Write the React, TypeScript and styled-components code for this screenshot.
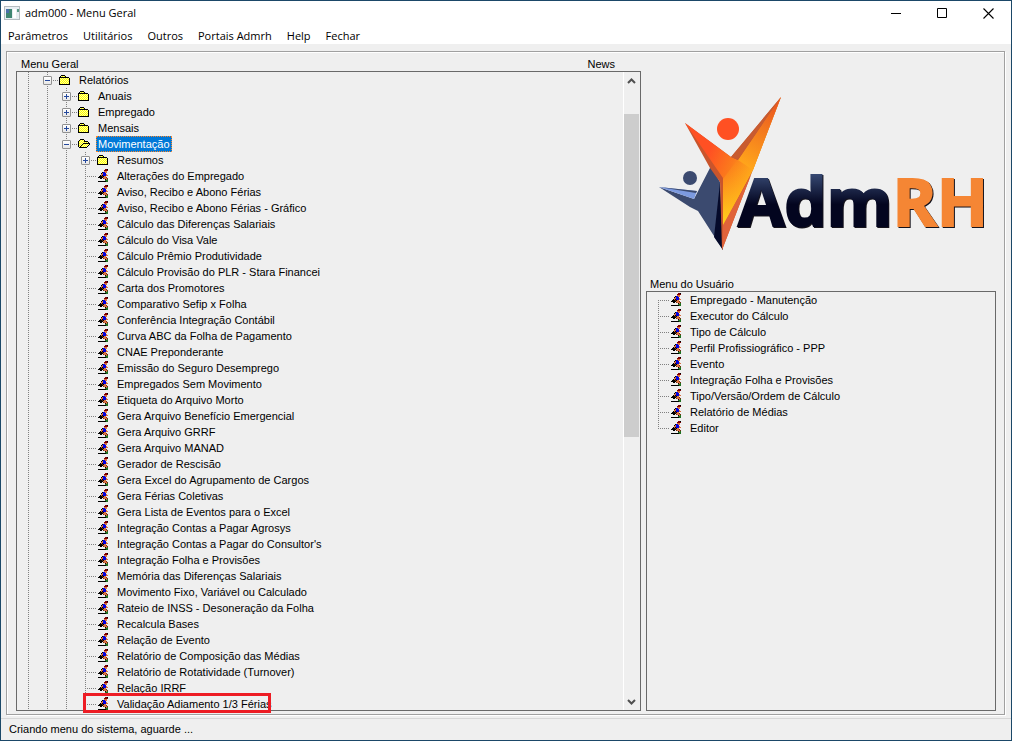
import React from "react";
import styled, { createGlobalStyle, css } from "styled-components";

const GlobalStyle = createGlobalStyle`
  *, *::before, *::after { box-sizing: border-box; }
  body { margin: 0; background: #efefef; }
  button { font: inherit; color: inherit; background: none; border: 0; padding: 0; margin: 0; }
`;

const legacyFont = css`
  font: 11px/16px "Liberation Sans", Arial, sans-serif;
  color: #000;
`;

const Window = styled.div`
  min-height: 100vh;
  display: flex;
  flex-direction: column;
  border: 1px solid #1b4868;
  background: #efefef;
  ${legacyFont}
`;

const TitleBar = styled.header`
  display: flex;
  align-items: center;
  height: 24px;
  padding-left: 3px;
  background: #fff;
  font: 11px/16px "Open Sans", "Noto Sans", sans-serif;
`;

const Title = styled.h1`
  flex: 1;
  margin: 0 0 0 5px;
  font: inherit;
`;

const CaptionButton = styled.button`
  width: 46px;
  height: 24px;
  display: flex;
  align-items: center;
  justify-content: center;
`;

const MenuBar = styled.nav`
  display: flex;
  gap: 15px;
  height: 19px;
  padding-left: 7px;
  background: #fff;
  font: 11px/22px "Open Sans", "Noto Sans", sans-serif;
`;

const MenuButton = styled.button`
  white-space: nowrap;
  height: 22px;
`;

const Frame = styled.main`
  flex: 1;
  display: flex;
  gap: 5px;
  margin: 7px 6px 3px 5px;
  padding: 4px 8px 3px 9px;
  border: 1px solid #a0a0a0;
  box-shadow: 1px 1px 0 #fff, inset 1px 1px 0 #fff;
`;

const MainColumn = styled.section`
  position: relative;
  flex: 625 1 0;
  min-width: 0;
  display: flex;
  flex-direction: column;
`;

const SideColumn = styled.section`
  flex: 350 1 0;
  min-width: 0;
  display: flex;
  flex-direction: column;
`;

const Captions = styled.div`
  display: flex;
  justify-content: space-between;
  height: 15px;
  padding: 0 26px 0 5px;
`;

const SideCaption = styled.h2`
  margin: 0;
  height: 15px;
  padding-left: 4px;
  font: inherit;
`;

const Panel = styled.div`
  flex: 1;
  display: flex;
  border: 1px solid #696969;
`;

const Tree = styled.ul`
  flex: 1;
  min-width: 0;
  height: 638px;
  margin: 0;
  padding: 0 0 0 2px;
  list-style: none;
  overflow: hidden;
`;

const SideTree = styled(Tree)`
  height: auto;
`;

const Row = styled.li`
  display: flex;
  height: 16px;
  white-space: nowrap;
`;

const dotsDown = "repeating-linear-gradient(to bottom, #808080 0 1px, transparent 1px 2px)";
const dotsAcross = "repeating-linear-gradient(to right, #808080 0 1px, transparent 1px 2px)";

type Span = "full" | "top" | "bottom";

const Guide = styled.span<{ $span?: Span; $branch?: boolean }>`
  flex: none;
  width: 19px;
  height: 16px;
  display: flex;
  align-items: center;
  justify-content: center;
  background-image: ${dotsDown}, ${p => (p.$branch ? dotsAcross : "none")};
  background-repeat: no-repeat;
  background-size: 1px ${p => (p.$span === "top" || p.$span === "bottom" ? "8px" : "16px")}, 10px 1px;
  background-position: 9px ${p => (p.$span === "bottom" ? "8px" : "0")}, 9px 8px;
`;

const Expander = styled.button`
  flex: none;
  width: 9px;
  height: 9px;
  margin-top: 1px;
  border: 1px solid #919191;
  border-radius: 1px;
  background: linear-gradient(#fff, #e6e6e6);
  display: flex;
`;

const IconCell = styled.span`
  flex: none;
  width: 19px;
  height: 16px;
  display: flex;
  align-items: center;
  justify-content: flex-start;
  padding-left: 2px;
  background: ${dotsAcross} 0 8px / 2px 1px no-repeat;
`;

const Label = styled.span<{ $selected?: boolean }>`
  margin-left: 1px;
  padding: 0 2px;
  ${p =>
    p.$selected &&
    css`
      background: #0078d7;
      color: #fff;
      outline: 1px dotted #ff8728;
      outline-offset: -1px;
    `}
`;

const ScrollBar = styled.div`
  flex: none;
  width: 17px;
  display: flex;
  flex-direction: column;
  border-left: 1px solid #fff;
  padding-right: 1px;
`;

const ScrollButton = styled.button`
  height: 17px;
  display: flex;
  align-items: center;
  justify-content: center;
`;

const ScrollTrack = styled.div`
  flex: 1;
  padding-top: 25px;
`;

const ScrollThumb = styled.div`
  height: 55.8%;
  background: #cdcdcd;
`;

const Highlight = styled.div`
  position: absolute;
  left: 67px;
  bottom: -2px;
  width: 188px;
  height: 20px;
  border: 3px solid #ed1c24;
`;

const LogoArea = styled.div`
  height: 220px;
  padding: 38px 0 0 10px;
`;

const LogoWord = styled.text`
  font: 700 67px "Open Sans", "Noto Sans", sans-serif;
  filter: drop-shadow(1px 1px 0 #15131c);
`;

const StatusBar = styled.footer`
  height: 22px;
  padding: 2px 8px;
  border-top: 1px solid #d7d7d7;
`;

const PixelArt = ({ rows, palette }: { rows: string[]; palette: Record<string, string> }) => (
  <svg width={rows[0].length} height={rows.length} shapeRendering="crispEdges" aria-hidden="true">
    {rows.flatMap((row, y) =>
      [...row].map((c, x) => (palette[c] ? <rect key={`${x}-${y}`} x={x} y={y} width="1" height="1" fill={palette[c]} /> : null)),
    )}
  </svg>
);

const palette = {
  k: "#000000", y: "#ffff00", w: "#ffffa0", r: "#800000", o: "#d87040", b: "#0000e0", g: "#207020", n: "#703010",
};

const folderRows = [
  "..kkkk.....",
  ".kwywyk....",
  "kkkkkkkkkk.",
  "kwywywywywk",
  "kywywywywyk",
  "kwywywywywk",
  "kywywywywyk",
  "kwywywywywk",
  "kywywywywyk",
  "kkkkkkkkkkk",
];

const openRows = [
  "..kkkk......",
  ".kywywk.....",
  "kywywykkkk..",
  "kwywywywywk.",
  "kywywkkkkkkk",
  "kwywkywywywk",
  "kywkywywywk.",
  "kwkywywywk..",
  ".kkkkkkkk...",
  "............",
];

const runnerRows = [
  "........rrk.",
  ".......rrrr.",
  ".......ooo..",
  ".....kbboo..",
  "....kobbb...",
  "....oobbbo..",
  "...kokbbboo.",
  "..kkknkoo...",
  ".kkkkkooon..",
  "...kk.nooon.",
  "........kog.",
  "........ggg.",
  ".kkkkkkkkgg.",
  "............",
];

const art = { folder: folderRows, open: openRows, run: runnerRows };

interface Node {
  label: string;
  depth: number;
  icon: keyof typeof art;
  state?: "+" | "-";
  selected?: boolean;
}

const folders: Node[] = [
  { label: "Relatórios", depth: 1, icon: "folder", state: "-" },
  { label: "Anuais", depth: 2, icon: "folder", state: "+" },
  { label: "Empregado", depth: 2, icon: "folder", state: "+" },
  { label: "Mensais", depth: 2, icon: "folder", state: "+" },
  { label: "Movimentação", depth: 2, icon: "open", state: "-", selected: true },
  { label: "Resumos", depth: 3, icon: "folder", state: "+" },
];

const reports = [
  "Alterações do Empregado", "Aviso, Recibo e Abono Férias", "Aviso, Recibo e Abono Férias - Gráfico",
  "Cálculo das Diferenças Salariais", "Cálculo do Visa Vale", "Cálculo Prêmio Produtividade",
  "Cálculo Provisão do PLR - Stara Financei", "Carta dos Promotores", "Comparativo Sefip x Folha",
  "Conferência Integração Contábil", "Curva ABC da Folha de Pagamento", "CNAE Preponderante",
  "Emissão do Seguro Desemprego", "Empregados Sem Movimento", "Etiqueta do Arquivo Morto",
  "Gera Arquivo Benefício Emergencial", "Gera Arquivo GRRF", "Gera Arquivo MANAD", "Gerador de Rescisão",
  "Gera Excel do Agrupamento de Cargos", "Gera Férias Coletivas", "Gera Lista de Eventos para o Excel",
  "Integração Contas a Pagar Agrosys", "Integração Contas a Pagar do Consultor's",
  "Integração Folha e Provisões", "Memória das Diferenças Salariais", "Movimento Fixo, Variável ou Calculado",
  "Rateio de INSS - Desoneração da Folha", "Recalcula Bases", "Relação de Evento",
  "Relatório de Composição das Médias", "Relatório de Rotatividade (Turnover)", "Relação IRRF",
  "Validação Adiamento 1/3 Férias",
];

const mainNodes: Node[] = [...folders, ...reports.map((label): Node => ({ label, depth: 3, icon: "run" }))];

const userNodes = [
  "Empregado - Manutenção", "Executor do Cálculo", "Tipo de Cálculo", "Perfil Profissiográfico - PPP", "Evento",
  "Integração Folha e Provisões", "Tipo/Versão/Ordem de Cálculo", "Relatório de Médias", "Editor",
].map((label): Node => ({ label, depth: 0, icon: "run" }));

const TreeRow = ({ node, span }: { node: Node; span?: Span }) => (
  <Row>
    {Array.from({ length: node.depth }, (_, i) => <Guide key={i} />)}
    <Guide $branch $span={span}>
      {node.state && (
        <Expander aria-label={`${node.state === "+" ? "Expandir" : "Recolher"} ${node.label}`}>
          <svg width="7" height="7" shapeRendering="crispEdges" aria-hidden="true">
            <path d={node.state === "+" ? "M1 3h5v1H1zM3 1h1v5H3z" : "M1 3h5v1H1z"} fill="#24489c" />
          </svg>
        </Expander>
      )}
    </Guide>
    <IconCell><PixelArt rows={art[node.icon]} palette={palette} /></IconCell>
    <Label $selected={node.selected}>{node.label}</Label>
  </Row>
);

const Logo = () => (
  <svg width="336" height="160" viewBox="656 94 336 160" role="img" aria-label="AdmRH">
    <defs>
      <linearGradient id="navy" gradientUnits="userSpaceOnUse" x1="0" y1="172" x2="0" y2="226">
        <stop offset="0" stopColor="#3a4d78" />
        <stop offset="0.6" stopColor="#03051f" />
      </linearGradient>
      <linearGradient id="flame" gradientUnits="userSpaceOnUse" x1="705" y1="160" x2="752" y2="182">
        <stop offset="0" stopColor="#ff5023" />
        <stop offset="0.5" stopColor="#fb7a1c" />
        <stop offset="1" stopColor="#ffb619" />
      </linearGradient>
      <linearGradient id="gold" gradientUnits="userSpaceOnUse" x1="735" y1="150" x2="726" y2="225">
        <stop offset="0" stopColor="#ff8a1c" stopOpacity="0" />
        <stop offset="1" stopColor="#ffd21c" />
      </linearGradient>
      <linearGradient id="arm" gradientUnits="userSpaceOnUse" x1="780" y1="98" x2="745" y2="165">
        <stop offset="0" stopColor="#e84f20" />
        <stop offset="1" stopColor="#ffa51b" />
      </linearGradient>
    </defs>
    <path d="M659 187L694 199L711 166L720 182L723 250L698 211L690 207Z" fill="#3b4a6f" />
    <path d="M659 187L697 191L694 199Z" fill="#7c9ae0" />
    <path d="M659 187L697 191L696 193Z" fill="#3b4a6f" />
    <path d="M720 183L723 250L714 237Z" fill="#050a2a" />
    <path d="M685 123L710 168L720 182L722 250L781 97L731 157Z" fill="#c9552c" />
    <path d="M685 123L731 157L738 160L781 97L753 170L723 226V178Z" fill="url(#flame)" />
    <path d="M738 159L781 97L754 167L723 226V179Z" fill="url(#gold)" />
    <path d="M781 97L738 160L753 170Z" fill="url(#arm)" />
    <path d="M731 157L781 97L738 160Z" fill="#c85b30" />
    <path d="M723 225L751 175L722 250Z" fill="#e0633a" />
    <circle cx="728" cy="129" r="11" fill="#ff5023" />
    <circle cx="690" cy="178" r="7" fill="#3b4a6f" />
    <LogoWord x="738" y="226">
      <tspan fill="url(#navy)" stroke="url(#navy)" strokeWidth="2">Adm</tspan>
      <tspan fill="#f58634" stroke="#f58634" strokeWidth="2">RH</tspan>
    </LogoWord>
  </svg>
);

export default function App() {
  return (
    <Window>
      <GlobalStyle />
      <TitleBar>
        <svg width="16" height="14" shapeRendering="crispEdges" aria-hidden="true">
          <path d="M0 0h16v14H0z" fill="#b5bcc0" />
          <path d="M1 1h14v12H1z" fill="#e8eef2" />
          <path d="M2 3h6v9H2z" fill="#3f8571" />
          <path d="M2 3h3v4H2z" fill="#4a70a8" />
          <path d="M9 3h3v9H9z" fill="#fff" />
          <path d="M13 3h2v3h-2z" fill="#5d9a88" />
        </svg>
        <Title>adm000 - Menu Geral</Title>
        <CaptionButton aria-label="Minimizar">
          <svg width="11" height="11" aria-hidden="true"><path d="M0 5.500h10" stroke="#000" /></svg>
        </CaptionButton>
        <CaptionButton aria-label="Maximizar">
          <svg width="10" height="10" aria-hidden="true"><path d="M.5.5h9v9h-9z" fill="none" stroke="#000" /></svg>
        </CaptionButton>
        <CaptionButton aria-label="Fechar janela">
          <svg width="11" height="11" aria-hidden="true"><path d="M.5.5l10 10m0-10l-10 10" stroke="#000" strokeWidth="1.100" /></svg>
        </CaptionButton>
      </TitleBar>
      <MenuBar>
        {["Parâmetros", "Utilitários", "Outros", "Portais Admrh", "Help", "Fechar"].map(m => <MenuButton key={m}>{m}</MenuButton>)}
      </MenuBar>
      <Frame>
        <MainColumn>
          <Captions><span>Menu Geral</span><span>News</span></Captions>
          <Panel>
            <Tree>{mainNodes.map(n => <TreeRow key={n.label} node={n} />)}</Tree>
            <ScrollBar>
              <ScrollButton aria-label="Rolar para cima">
                <svg width="9" height="6" aria-hidden="true"><path d="M1 5l3.500-3.500L8 5" fill="none" stroke="#505050" strokeWidth="2" /></svg>
              </ScrollButton>
              <ScrollTrack><ScrollThumb /></ScrollTrack>
              <ScrollButton aria-label="Rolar para baixo">
                <svg width="9" height="6" aria-hidden="true"><path d="M1 1l3.500 3.500L8 1" fill="none" stroke="#505050" strokeWidth="2" /></svg>
              </ScrollButton>
            </ScrollBar>
          </Panel>
          <Highlight />
        </MainColumn>
        <SideColumn>
          <LogoArea><Logo /></LogoArea>
          <SideCaption>Menu do Usuário</SideCaption>
          <Panel>
            <SideTree>
              {userNodes.map((n, i) => (
                <TreeRow key={n.label} node={n} span={i === 0 ? "bottom" : i === userNodes.length - 1 ? "top" : "full"} />
              ))}
            </SideTree>
          </Panel>
        </SideColumn>
      </Frame>
      <StatusBar role="status">Criando menu do sistema, aguarde ...</StatusBar>
    </Window>
  );
}
